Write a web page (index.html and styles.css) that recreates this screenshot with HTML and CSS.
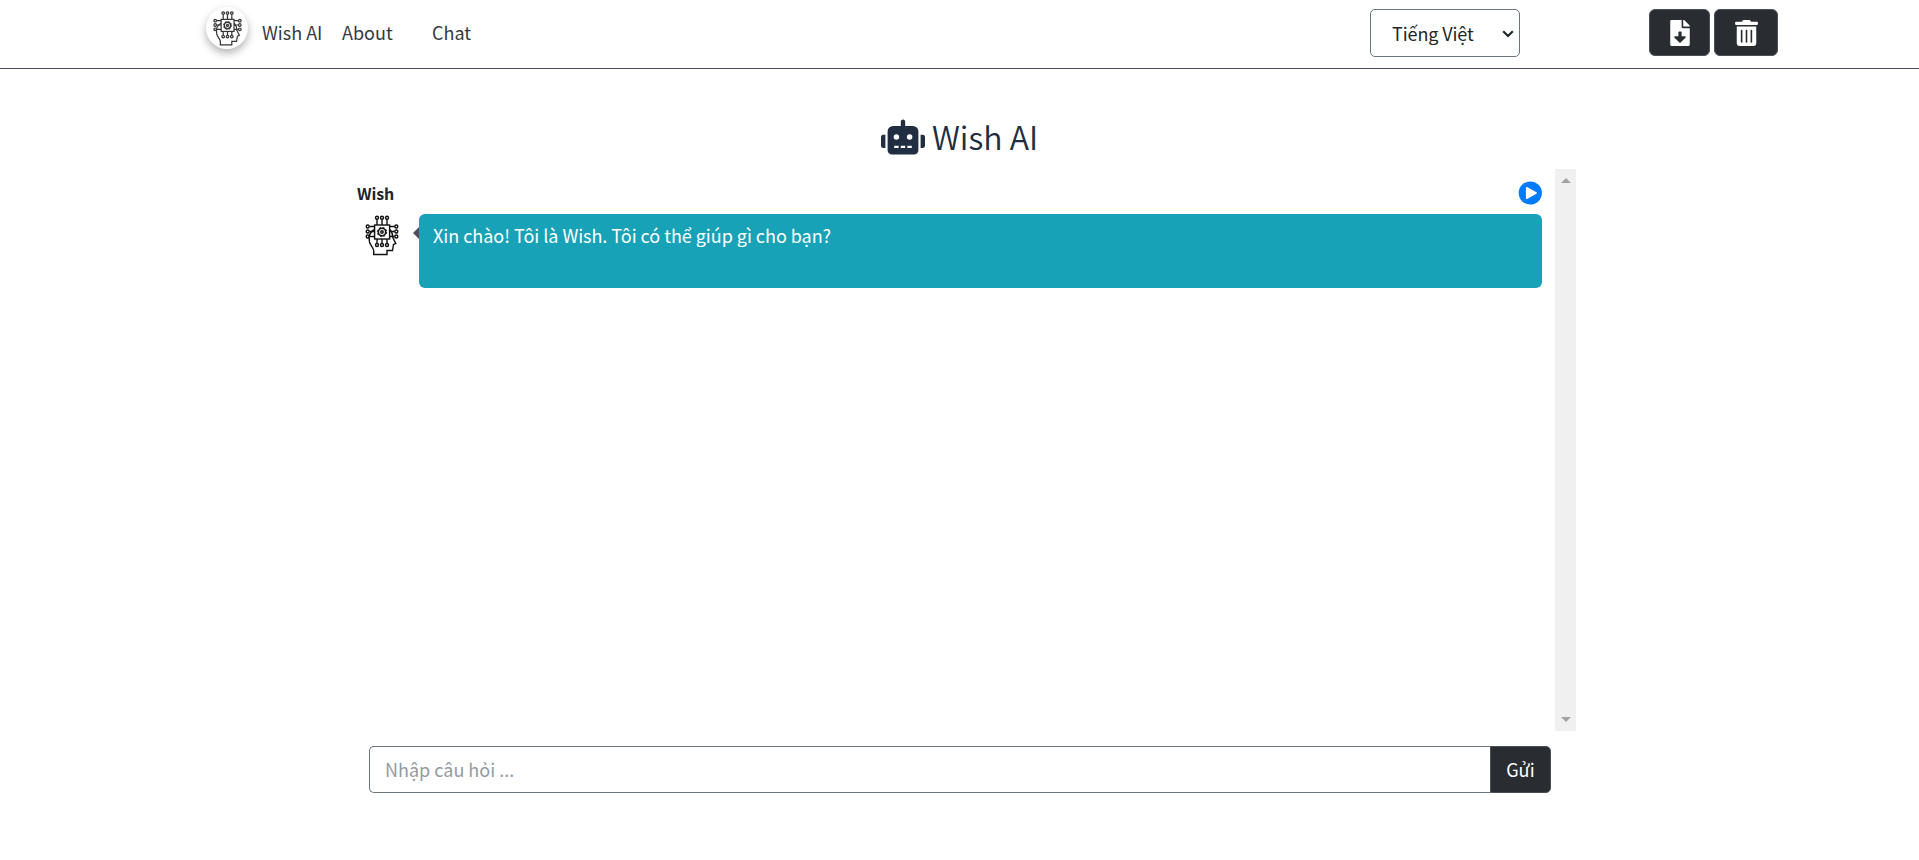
FILE: index.html
```html
<!DOCTYPE html>
<html lang="vi">
<head>
<meta charset="utf-8">
<title>Wish AI</title>
<link rel="stylesheet" href="styles.css">
</head>
<body>
<svg width="0" height="0" class="sprite">
  <symbol id="brain" viewBox="0 0 36 44">
    <g fill="none" stroke="currentColor" stroke-width="1.4">
      <rect x="10.6" y="12" width="15" height="14"/>
      <path d="M13 12V6.500M18 12V6.500M23 12V6.500M13 26v4.500M18 26v4.500M23 26v4.500M10.600 13.500H5.500M10.600 18.500H5.500M10.600 23.500H5.500M25.600 13.500h5M25.600 18.500h5M25.600 23.500h5"/>
      <circle cx="13" cy="4.700" r="1.500"/><circle cx="18" cy="4.700" r="1.500"/><circle cx="23" cy="4.700" r="1.500"/>
      <circle cx="13" cy="32" r="1.500"/><circle cx="18" cy="32" r="1.500"/><circle cx="23" cy="32" r="1.500"/>
      <circle cx="3.700" cy="13.500" r="1.500"/><circle cx="3.700" cy="18.500" r="1.500"/><circle cx="3.700" cy="23.500" r="1.500"/>
      <circle cx="32.300" cy="13.500" r="1.500"/><circle cx="32.300" cy="18.500" r="1.500"/><circle cx="32.300" cy="23.500" r="1.500"/>
      <circle cx="18" cy="19" r="3.700" stroke-width="1.600"/><circle cx="18" cy="19" r="1.200"/>
      <circle cx="18" cy="19" r="4.700" stroke-width="1" stroke-dasharray="1.850"/>
      <path d="M10.500 16.500C5.500 19 4.500 24 5.500 29c.8 3.500 3.800 5.500 4.200 8.500V41.500H23v-4h5.500l1-6 2.300-1-3-6c0-3.500-1-6-3-8"/>
    </g>
  </symbol>
</svg>

<header class="navbar">
  <nav class="nav-links">
    <span class="logo"><svg class="logo-art"><use href="#brain"/></svg></span>
    <a class="brand">Wish AI</a>
    <a class="about">About</a>
    <a class="chat-link">Chat</a>
  </nav>
  <div class="actions">
    <div class="select"><span>Tiếng Việt</span>
      <svg width="12" height="8" viewBox="0 0 12 8"><path d="M1.200 1.300 6 6l4.800-4.700" fill="none" stroke="#212529" stroke-width="2.200"/></svg>
    </div>
    <button class="btn save" aria-label="Download">
      <svg width="20" height="26" viewBox="0 0 384 512"><path fill="#fff" d="M224 136V0H24C10.700 0 0 10.700 0 24v464c0 13.300 10.700 24 24 24h336c13.300 0 24-10.700 24-24V160H248c-13.200 0-24-10.800-24-24zm76.450 211.360-96.420 95.700c-6.650 6.610-17.390 6.610-24.040 0l-96.420-95.700C73.420 337.290 80.540 320 94.820 320H160v-80c0-8.840 7.160-16 16-16h32c8.840 0 16 7.160 16 16v80h65.180c14.280 0 21.400 17.290 11.270 27.360zM377 105 279.100 7c-4.500-4.500-10.600-7-17-7H256v128h128v-6.100c0-6.300-2.500-12.400-7-16.900z"/></svg>
    </button>
    <button class="btn trash" aria-label="Delete">
      <svg width="23" height="26" viewBox="0 0 448 512"><path fill="#fff" d="M32 464a48 48 0 0 0 48 48h288a48 48 0 0 0 48-48V128H32zm272-256a16 16 0 0 1 32 0v224a16 16 0 0 1-32 0zm-96 0a16 16 0 0 1 32 0v224a16 16 0 0 1-32 0zm-96 0a16 16 0 0 1 32 0v224a16 16 0 0 1-32 0zM432 32H312l-9.400-18.700A24 24 0 0 0 281.100 0H166.800a23.720 23.720 0 0 0-21.400 13.300L136 32H16A16 16 0 0 0 0 48v32a16 16 0 0 0 16 16h416a16 16 0 0 0 16-16V48a16 16 0 0 0-16-16z"/></svg>
    </button>
  </div>
</header>

<main class="content">
  <h1 class="title">
    <svg class="robot" width="44" height="36" viewBox="0 0 640 512"><path fill="currentColor" d="M32 224h32v192H32a31.960 31.960 0 0 1-32-32V256a31.960 31.960 0 0 1 32-32zm512-48v272a64.060 64.060 0 0 1-64 64H160a64.060 64.060 0 0 1-64-64V176a79.970 79.970 0 0 1 80-80h112V32a32 32 0 0 1 64 0v64h112a79.970 79.970 0 0 1 80 80zm-280 80a40 40 0 1 0-40 40 40 40 0 0 0 40-40zm-8 128h-64v32h64zm96 0h-64v32h64zm104-128a40 40 0 1 0-40 40 40 40 0 0 0 40-40zm-8 128h-64v32h64zm192-128v128a31.960 31.960 0 0 1-32 32h-32V224h32a31.960 31.960 0 0 1 32 32z"/></svg>
    <span>Wish AI</span>
  </h1>
  <section class="chat-box">
    <div class="messages">
      <div class="message-head">
        <strong>Wish</strong>
        <svg width="24" height="24" viewBox="0 0 24 24"><circle cx="12.300" cy="12" r="11.600" fill="#007bff"/><path d="M8.700 6.800v10.400L18.100 12z" fill="#fff" stroke="#fff" stroke-width="1.600" stroke-linejoin="round"/></svg>
      </div>
      <div class="message-row">
        <svg class="avatar"><use href="#brain"/></svg>
        <i class="tail"></i>
        <div class="bubble">Xin chào! Tôi là Wish. Tôi có thể giúp gì cho bạn?</div>
      </div>
    </div>
    <div class="scrollbar"><i class="arrow-up"></i><i class="arrow-down"></i></div>
  </section>
  <form class="ask">
    <input class="question" type="text" placeholder="Nhập câu hỏi ...">
    <button class="send" type="button">Gửi</button>
  </form>
</main>
</body>
</html>
```

FILE: styles.css
```css
* { box-sizing: border-box; }
body {
  margin: 0;
  background: #fff;
  color: #212529;
  font: 400 18px/27px "Noto Sans CJK JP", "Noto Sans", sans-serif;
}
svg { display: block; flex: none; }
.sprite { position: absolute; }
button, input { font: inherit; }

.navbar {
  display: flex;
  justify-content: space-between;
  height: 69px;
  padding: 7px 141px 0 206px;
  border-bottom: 1px solid #495057;
}
.nav-links { display: flex; align-items: flex-start; color: #343a40; }
.nav-links a { margin-top: 12px; white-space: nowrap; }
.logo {
  display: flex;
  align-items: center;
  justify-content: center;
  width: 42px;
  height: 42px;
  margin-right: 14px;
  border-radius: 50%;
  box-shadow: 0 4px 8px rgba(0, 0, 0, .3);
}
.logo-art { width: 31px; height: 38px; color: #333; }
.brand { width: 80px; }
.about { width: 90px; }
.actions { display: flex; align-items: flex-start; padding-top: 2px; }
.select {
  display: flex;
  align-items: center;
  justify-content: space-between;
  width: 150px;
  height: 48px;
  margin-right: 129px;
  padding: 0 5px 0 21px;
  border: 1px solid #6c757d;
  border-radius: 5px;
  letter-spacing: -.1px;
}
.select svg { margin-top: 2px; }
.btn {
  display: flex;
  align-items: center;
  justify-content: center;
  height: 47px;
  padding: 0;
  border: 1px solid #495057;
  border-radius: 6px;
  background: #292d32;
}
.save { width: 61px; margin-right: 4px; }
.trash { width: 64px; }

.content { display: flex; flex-direction: column; }
.title {
  display: flex;
  justify-content: center;
  gap: 7px;
  margin: 49px 0 14px;
  color: #212d40;
  font-size: 32px;
  font-weight: 350;
  line-height: 36px;
}
.robot { margin: 1px 0 0; }
.chat-box {
  display: flex;
  justify-content: space-between;
  width: 1219px;
  height: 562px;
  margin-left: 357px;
}
.messages { width: 1185px; padding-top: 12px; }
.message-head { display: flex; justify-content: space-between; height: 33px; }
.message-head strong { font-size: 16px; line-height: 24px; letter-spacing: -.1px; }
.message-row { display: flex; }
.avatar { width: 36px; height: 44px; margin: -1px 13px 0 7px; color: #111; }
.tail {
  margin: 13px 0 0;
  width: 6px;
  height: 12px;
  border: solid transparent;
  border-width: 6px 6px 6px 0;
  border-right-color: #495057;
}
.bubble {
  flex: 1;
  height: 74px;
  padding: 8px 14px;
  border-radius: 6px;
  background: #17a2b8;
  color: #fff;
  letter-spacing: -.03px;
}
.scrollbar {
  display: flex;
  flex-direction: column;
  align-items: center;
  justify-content: space-between;
  width: 21px;
  padding: 9px 0;
  background: #f0f0f0;
}
.arrow-up, .arrow-down { border: 5px solid transparent; }
.arrow-up { border-top: 0; border-bottom-color: #a3a3a3; }
.arrow-down { border-bottom: 0; border-top-color: #a3a3a3; }

.ask { display: flex; width: 1182px; height: 47px; margin: 15px 0 0 369px; }
.question {
  flex: 1;
  padding: 0 16px 0 15px;
  border: 1px solid #6c757d;
  border-right: 0;
  border-radius: 5px 0 0 5px;
  outline: none;
}
.question::placeholder { color: #939ba2; opacity: 1; }
.send {
  width: 61px;
  padding: 0;
  border: 1px solid #495057;
  border-radius: 0 5px 5px 0;
  background: #292d32;
  color: #fff;
}
```
